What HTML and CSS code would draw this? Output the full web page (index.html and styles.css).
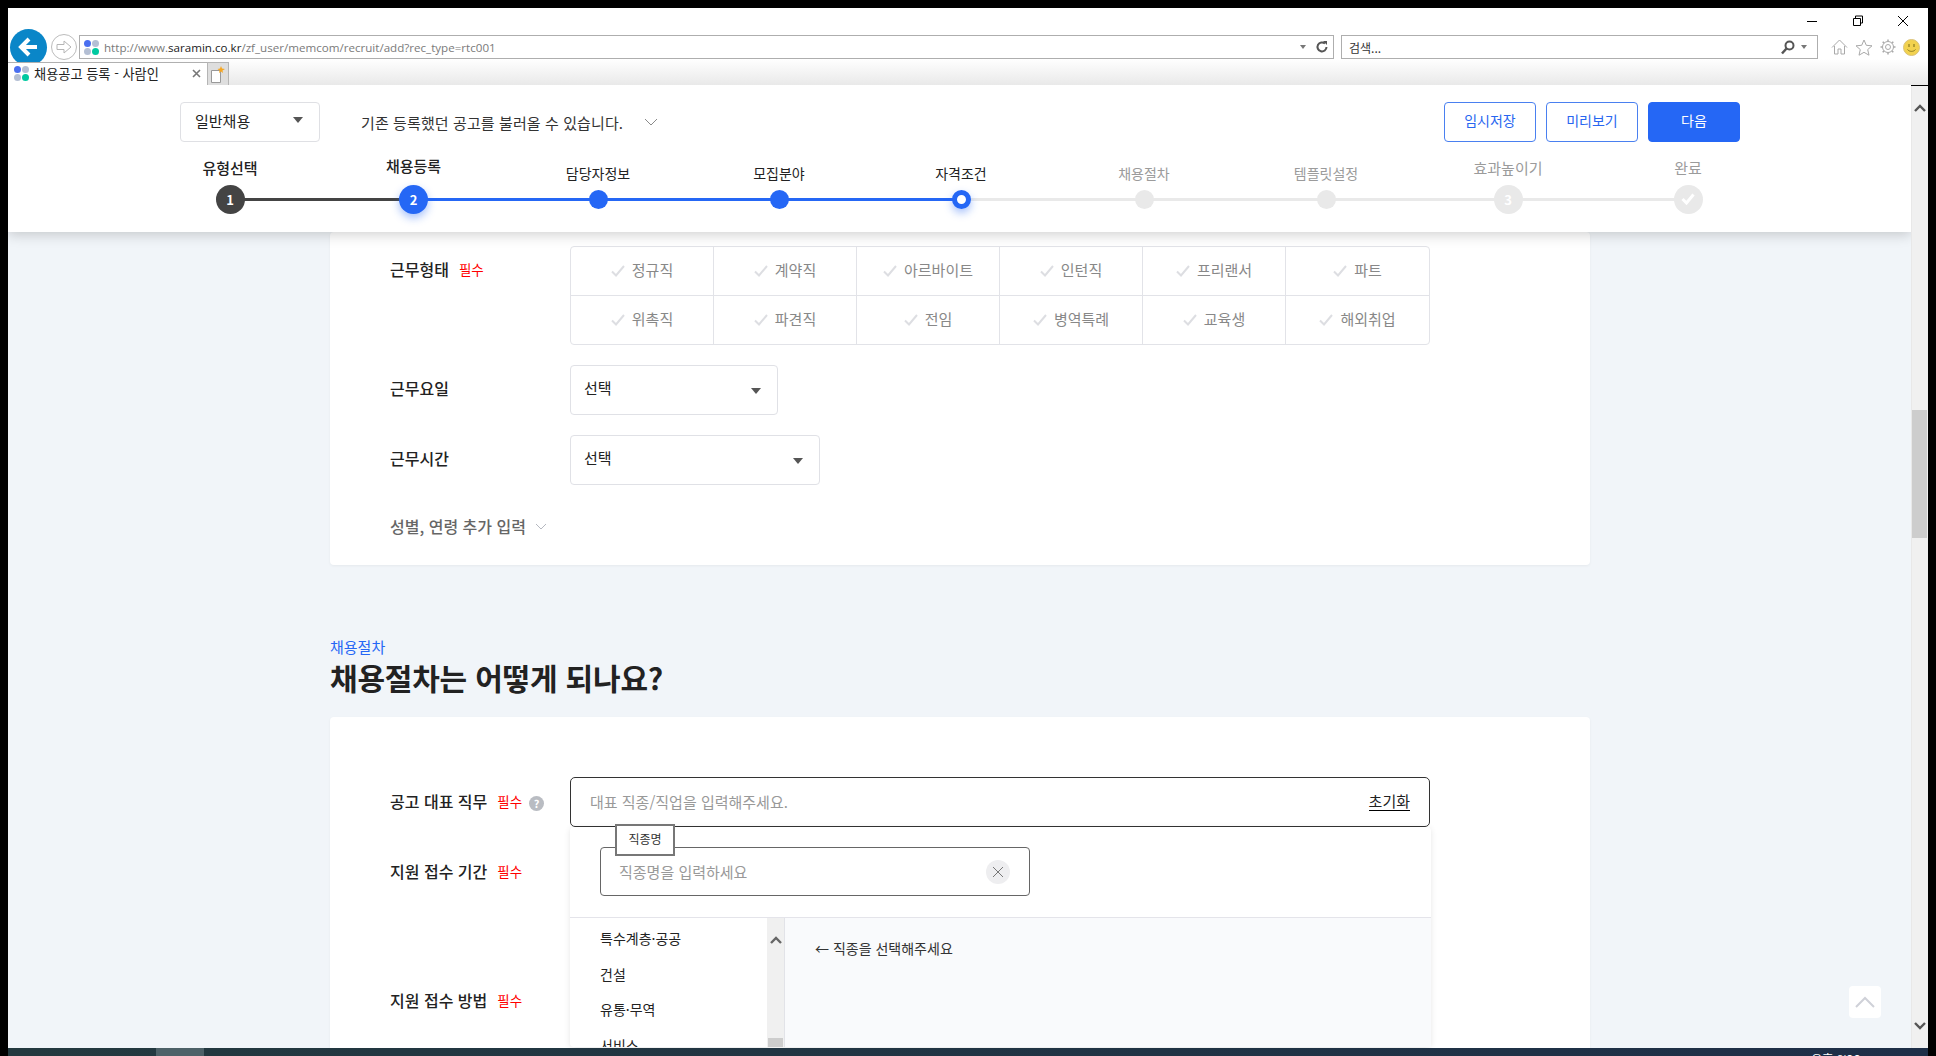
FILE: index.html
```html
<!DOCTYPE html>
<html lang="ko">
<head>
    <meta charset="UTF-8">
    <title>채용공고 등록 - 사람인</title>
    <link rel="stylesheet" href="styles.css">
</head>
<body>
    <svg class="defs" width="0" height="0">
        <symbol id="check" viewBox="0 0 14 12"><path d="M1 6.5 5 10.5 13 1" fill="none" stroke="currentColor" stroke-width="2"/></symbol>
        <symbol id="chev-up" viewBox="0 0 12 8"><path d="M1 7 6 2l5 5" fill="none" stroke="currentColor" stroke-width="2.4"/></symbol>
    </svg>

    <div class="chrome">
        <div class="titlebar">
            <svg class="winbtn" width="12" height="12" viewBox="0 0 12 12"><path d="M1 6.5h10" stroke="#000" stroke-width="1"/></svg>
            <svg class="winbtn" width="12" height="12" viewBox="0 0 12 12"><path d="M3.5 3V1h7v7h-2M1.500 3.500h7v7h-7z" fill="none" stroke="#000"/></svg>
            <svg class="winbtn" width="12" height="12" viewBox="0 0 12 12"><path d="M1 1l10 10M11 1 1 11" stroke="#000"/></svg>
        </div>
        <div class="navbar">
            <div class="back">
                <svg width="24" height="24" viewBox="0 0 24 24"><path d="M20 12H5M12 4l-8 8 8 8" fill="none" stroke="#fff" stroke-width="4"/></svg>
            </div>
            <div class="forward">
                <svg width="18" height="16" viewBox="0 0 18 16"><path d="M2 5.500h7V2l7 6-7 6v-3.500H2z" fill="none" stroke="#b5b5b5"/></svg>
            </div>
            <div class="address">
                <span class="logo"><i></i><i></i><i></i><i></i></span>
                <span class="url">http://www.<b>saramin.co.kr</b>/zf_user/memcom/recruit/add?rec_type=rtc001</span>
                <span class="mini-arrow"></span>
                <svg width="14" height="14" viewBox="0 0 14 14"><path d="M11.500 7a4.500 4.500 0 1 1-1.500-3.400" fill="none" stroke="#555" stroke-width="2"/><path d="M8 1l4 0 0 4z" fill="#555"/></svg>
            </div>
            <div class="search">
                <span class="search-text">검색...</span>
                <svg width="14" height="15" viewBox="0 0 14 15"><circle cx="8.500" cy="5.500" r="4" fill="none" stroke="#555" stroke-width="2"/><path d="M5.500 8.500 1 13.500" stroke="#555" stroke-width="2.500"/></svg>
                <span class="mini-arrow"></span>
            </div>
            <div class="tools">
                <svg width="17" height="16" viewBox="0 0 17 16"><path d="M1 8.500 8.500 1 16 8.500M3.500 7v8h3.500v-5h3v5h3.500V7" fill="none" stroke="#a9a9a9"/></svg>
                <svg width="18" height="17" viewBox="0 0 18 17"><path d="M9 1l2.300 5.300 5.700.5-4.300 3.800 1.300 5.600L9 13.300l-5 2.900 1.300-5.600L1 6.800l5.700-.5z" fill="none" stroke="#a9a9a9"/></svg>
                <svg width="16" height="16" viewBox="0 0 16 16"><circle cx="8" cy="8" r="2.500" fill="none" stroke="#a9a9a9"/><circle cx="8" cy="8" r="5.500" fill="none" stroke="#a9a9a9" stroke-width="1"/><path d="M8 .5v2M8 13.500v2M.5 8h2M13.500 8h2M2.700 2.700l1.400 1.400M11.900 11.900l1.400 1.400M13.300 2.700l-1.400 1.400M4.100 11.900l-1.400 1.400" stroke="#a9a9a9" stroke-width="1.500"/></svg>
                <svg width="17" height="17" viewBox="0 0 17 17"><circle cx="8.500" cy="8.500" r="8" fill="#f2d24f" stroke="#d9c27a"/><path d="M6 5v3M11 5v3" stroke="#8a7a20" stroke-width="1.200"/><path d="M4.500 10.500c2 2.500 6 2.500 8 0" fill="none" stroke="#8a7a20"/></svg>
            </div>
        </div>
        <div class="tabbar">
            <div class="tab">
                <span class="logo"><i></i><i></i><i></i><i></i></span>
                <span class="tab-title">채용공고 등록 - 사람인</span>
                <svg class="tab-close" width="9" height="9" viewBox="0 0 9 9"><path d="M1 1l7 7M8 1 1 8" stroke="#777" stroke-width="1.600"/></svg>
            </div>
            <div class="newtab">
                <svg width="14" height="17" viewBox="0 0 14 17"><path d="M.5 4.500h9v12h-9z" fill="#fff" stroke="#999"/><path d="M10 0l1 2.500L14 3l-2.500 1.500L12 7l-2-1.500L8 7l.5-2.500L6.500 3 9 2.500z" fill="#f5a623"/></svg>
            </div>
        </div>
    </div>

    <div class="viewport">
        <div class="page">
            <header class="header">
                <div class="toolbar">
                    <div class="toolbar-left">
                        <div class="type-select">일반채용<span class="caret"></span></div>
                        <div class="loader">기존 등록했던 공고를 불러올 수 있습니다.
                            <svg width="14" height="8" viewBox="0 0 14 8"><path d="M1 1l6 6 6-6" fill="none" stroke="#8a8a8a"/></svg>
                        </div>
                    </div>
                    <div class="toolbar-right">
                        <button class="btn">임시저장</button>
                        <button class="btn">미리보기</button>
                        <button class="btn btn-primary">다음</button>
                    </div>
                </div>
                <ol class="stepper">
                    <li class="step line-dark"><span class="step-label big">유형선택</span><span class="dot-wrap"><span class="dot large dark">1</span></span></li>
                    <li class="step line-blue"><span class="step-label big up">채용등록</span><span class="dot-wrap"><span class="dot large blue glow">2</span></span></li>
                    <li class="step line-blue"><span class="step-label">담당자정보</span><span class="dot-wrap"><span class="dot blue"></span></span></li>
                    <li class="step line-blue"><span class="step-label">모집분야</span><span class="dot-wrap"><span class="dot blue"></span></span></li>
                    <li class="step"><span class="step-label">자격조건</span><span class="dot-wrap"><span class="dot current glow"></span></span></li>
                    <li class="step off"><span class="step-label">채용절차</span><span class="dot-wrap"><span class="dot"></span></span></li>
                    <li class="step off"><span class="step-label">템플릿설정</span><span class="dot-wrap"><span class="dot"></span></span></li>
                    <li class="step off"><span class="step-label big">효과높이기</span><span class="dot-wrap"><span class="dot large">3</span></span></li>
                    <li class="step off last"><span class="step-label big">완료</span><span class="dot-wrap"><span class="dot large">
                        <svg width="14" height="12" viewBox="0 0 14 12"><path d="M1.500 6 5.500 10 12.500 1.500" fill="none" stroke="#fff" stroke-width="3"/></svg>
                    </span></span></li>
                </ol>
            </header>

            <main class="main">
                <section class="card card-cut">
                    <div class="row">
                        <div class="label">근무형태 <em class="req">필수</em></div>
                        <div class="checks">
                            <div class="check"><svg><use href="#check"/></svg>정규직</div>
                            <div class="check"><svg><use href="#check"/></svg>계약직</div>
                            <div class="check"><svg><use href="#check"/></svg>아르바이트</div>
                            <div class="check"><svg><use href="#check"/></svg>인턴직</div>
                            <div class="check"><svg><use href="#check"/></svg>프리랜서</div>
                            <div class="check"><svg><use href="#check"/></svg>파트</div>
                            <div class="check"><svg><use href="#check"/></svg>위촉직</div>
                            <div class="check"><svg><use href="#check"/></svg>파견직</div>
                            <div class="check"><svg><use href="#check"/></svg>전임</div>
                            <div class="check"><svg><use href="#check"/></svg>병역특례</div>
                            <div class="check"><svg><use href="#check"/></svg>교육생</div>
                            <div class="check"><svg><use href="#check"/></svg>해외취업</div>
                        </div>
                    </div>
                    <div class="row">
                        <div class="label">근무요일</div>
                        <div class="select select-day">선택<span class="caret"></span></div>
                    </div>
                    <div class="row">
                        <div class="label">근무시간</div>
                        <div class="select select-time">선택<span class="caret"></span></div>
                    </div>
                    <div class="more">성별, 연령 추가 입력
                        <svg width="12" height="7" viewBox="0 0 12 7"><path d="M1 1l5 5 5-5" fill="none" stroke="#b5b8c0"/></svg>
                    </div>
                </section>

                <div class="section-head">
                    <p class="eyebrow">채용절차</p>
                    <h2 class="section-title">채용절차는 어떻게 되나요?</h2>
                </div>

                <section class="card card-steps">
                    <div class="row">
                        <div class="label">공고 대표 직무 <em class="req">필수</em><span class="help">?</span></div>
                        <div class="job-field">
                            <div class="job-input"><span class="placeholder">대표 직종/직업을 입력해주세요.</span><a class="reset">초기화</a></div>
                            <div class="dropdown">
                                <div class="dropdown-top">
                                    <div class="job-search">
                                        <span class="job-tag">직종명</span>
                                        <span class="placeholder">직종명을 입력하세요</span>
                                        <span class="clear"><svg width="12" height="12" viewBox="0 0 12 12"><path d="M1 1l10 10M11 1 1 11" stroke="#777"/></svg></span>
                                    </div>
                                </div>
                                <div class="dropdown-body">
                                    <ul class="job-list">
                                        <li>특수계층·공공</li>
                                        <li>건설</li>
                                        <li>유통·무역</li>
                                        <li>서비스</li>
                                    </ul>
                                    <div class="list-scroll">
                                        <svg width="12" height="8"><use href="#chev-up"/></svg>
                                        <span class="list-thumb"></span>
                                    </div>
                                    <div class="job-hint">← 직종을 선택해주세요</div>
                                </div>
                            </div>
                        </div>
                    </div>
                    <div class="row row-period">
                        <div class="label">지원 접수 기간 <em class="req">필수</em></div>
                    </div>
                    <div class="row">
                        <div class="label">지원 접수 방법 <em class="req">필수</em></div>
                    </div>
                </section>
            </main>

            <div class="to-top"><svg width="20" height="12" viewBox="0 0 20 12"><path d="M1 11 10 2l9 9" fill="none" stroke="#cfd1d8" stroke-width="2"/></svg></div>
        </div>
        <div class="scrollbar">
            <svg width="12" height="8"><use href="#chev-up"/></svg>
            <span class="thumb"></span>
            <svg class="flip" width="12" height="8"><use href="#chev-up"/></svg>
        </div>
    </div>

    <div class="taskbar">
        <span class="task-active"></span>
        <span class="clock">오후 8:26</span>
        <span class="show-desktop"></span>
    </div>
</body>
</html>
```

FILE: styles.css
```css
* {
    box-sizing: border-box;
}

html, body {
    height: 100%;
}

body {
    margin: 0;
    padding: 8px 8px 0;
    background-color: #000;
    display: flex;
    flex-direction: column;
    overflow: hidden;
    font-family: "Noto Sans CJK KR", "Noto Sans", sans-serif;
    color: #222;
}

.defs {
    display: block;
    height: 0;
}

/* browser chrome */
.chrome {
    flex: none;
    height: 77px;
    background-color: #fff;
}

.titlebar {
    height: 27px;
    display: flex;
    justify-content: flex-end;
    align-items: center;
    gap: 33.500px;
    padding: 0 19px 2px 0;
}

.navbar {
    height: 24px;
    display: flex;
    align-items: center;
}

.back {
    width: 37px;
    height: 37px;
    margin: 0 0 0 2px;
    border-radius: 50%;
    background-color: #0a86c8;
    display: flex;
    align-items: center;
    justify-content: center;
    flex: none;
}

.forward {
    width: 26px;
    height: 26px;
    margin-left: 4px;
    border: 1px solid #bcbcbc;
    border-radius: 50%;
    display: flex;
    align-items: center;
    justify-content: center;
    flex: none;
}

.address, .search {
    height: 24px;
    border: 1px solid #aeaeae;
    display: flex;
    align-items: center;
    font-size: 12px;
}

.address {
    width: 1255px;
    margin-left: 2px;
    padding: 0 4px;
    flex: none;
}

.address svg, .search svg {
    flex: none;
}

.logo {
    width: 15px;
    height: 15px;
    display: grid;
    grid-template-columns: 7px 7px;
    grid-template-rows: 7px 7px;
    gap: 1px;
    flex: none;
}

.logo i {
    border-radius: 50%;
    background-color: #b4bfd4;
}

.logo i:first-child {
    background-color: #4a6ff0;
}

.logo i:last-child {
    background-color: #00c9a0;
}

.url {
    margin-left: 5px;
    flex: 1;
    color: #7a7a7a;
    font-family: "Open Sans", sans-serif;
    font-size: 11.600px;
    white-space: nowrap;
}

.url b {
    font-weight: 400;
    color: #222;
}

.mini-arrow {
    width: 0;
    height: 0;
    border-left: 3.500px solid transparent;
    border-right: 3.500px solid transparent;
    border-top: 4px solid #777;
    margin-right: 9px;
    flex: none;
}

.search {
    width: 477px;
    margin-left: 7px;
    padding: 0 10px 0 7px;
    flex: none;
}

.search-text {
    flex: 1;
    font-size: 12px;
    color: #333;
}

.search .mini-arrow {
    margin: 0 0 0 6px;
}

.tools {
    flex: 1;
    display: flex;
    align-items: center;
    gap: 7px;
    padding-left: 13px;
}

.tabbar {
    height: 26px;
    padding-top: 3px;
    display: flex;
    background: linear-gradient(#fff, #e9e9e9);
}

.tab {
    width: 199px;
    height: 23px;
    padding: 0 5px 2px 6px;
    background-color: #fff;
    border-top: 1px solid #b0b0b0;
    display: flex;
    align-items: center;
}

.tab-title {
    margin-left: 5px;
    flex: 1;
    font-size: 13.200px;
    color: #222;
}

.tab-close {
    margin-right: 1px;
}

.newtab {
    width: 22px;
    height: 23px;
    background-color: #dedede;
    border: 1px solid #b5b5b5;
    border-bottom: 0;
    display: flex;
    align-items: center;
    justify-content: center;
}

/* page */
.viewport {
    flex: 1;
    min-height: 0;
    display: flex;
}

.page {
    flex: 1;
    position: relative;
    overflow: hidden;
    background-color: #f1f5f9;
}

.scrollbar {
    width: 17px;
    margin-top: 1px;
    background-color: #f0f0f0;
    border-left: 1px solid #e8e8e8;
    display: flex;
    flex-direction: column;
    align-items: center;
    color: #555;
    position: relative;
}

.scrollbar svg {
    position: absolute;
    top: 18px;
}

.scrollbar .flip {
    top: auto;
    bottom: 18px;
    transform: rotate(180deg);
}

.thumb {
    position: absolute;
    top: 324px;
    left: 0;
    width: 15px;
    height: 128px;
    background-color: #cdcdcd;
}

.header {
    height: 147px;
    position: relative;
    z-index: 5;
    background-color: #fff;
    box-shadow: 0 3px 12px rgba(0, 0, 0, 0.18);
}

.toolbar {
    height: 57px;
    padding: 17px 171px 0 172px;
    display: flex;
    justify-content: space-between;
}

.toolbar-left, .toolbar-right {
    display: flex;
    align-items: center;
}

.toolbar-right {
    gap: 10px;
}

.type-select {
    width: 140px;
    height: 40px;
    padding: 0 16px 4px 14px;
    border: 1px solid #dfe0e4;
    border-radius: 4px;
    display: flex;
    align-items: center;
    justify-content: space-between;
    font-size: 15px;
}

.caret {
    width: 0;
    height: 0;
    border-left: 5.500px solid transparent;
    border-right: 5.500px solid transparent;
    border-top: 6px solid #555;
}

.loader {
    margin-left: 41px;
    display: flex;
    align-items: center;
    gap: 21px;
    font-size: 15px;
    letter-spacing: 0.100px;
    color: #333;
}

.btn {
    width: 92px;
    height: 40px;
    padding: 0 0 4px;
    background-color: #fff;
    border: 1px solid #4a80f0;
    border-radius: 4px;
    color: #2866f0;
    font-family: inherit;
    font-size: 14px;
}

.btn-primary {
    background-color: #2567f5;
    border-color: #2567f5;
    color: #fff;
}

.stepper {
    margin: 0;
    padding: 0 0 0 131px;
    list-style: none;
    display: grid;
    grid-template-columns: 182px 185px 184px 178px 186px 180px 184px 180px 180px;
    height: 72px;
    align-items: end;
}

.step {
    display: flex;
    flex-direction: column;
    align-items: center;
}

.step-label {
    font-size: 14px;
    line-height: 20px;
    margin-bottom: 1px;
    color: #222;
}

.step-label.big {
    font-size: 15px;
    font-weight: 500;
    margin-bottom: 6px;
}

.step-label.up {
    margin-bottom: 8px;
}

.off .step-label {
    color: #9b9b9b;
    font-weight: 400;
}

.dot-wrap {
    width: 100%;
    height: 30px;
    display: flex;
    align-items: center;
    justify-content: center;
    position: relative;
}

.dot-wrap::after {
    content: "";
    position: absolute;
    left: 50%;
    top: 14px;
    width: calc(100% + 8px);
    height: 3px;
    background-color: #e9e9e9;
}

.line-dark .dot-wrap::after {
    background-color: #444;
}

.line-blue .dot-wrap::after {
    background-color: #2567f5;
}

.last .dot-wrap::after {
    display: none;
}

.dot {
    width: 19px;
    height: 19px;
    border-radius: 50%;
    background-color: #e9e9e9;
    color: #fff;
    font-size: 13px;
    font-weight: 700;
    display: flex;
    align-items: center;
    justify-content: center;
    position: relative;
    z-index: 1;
}

.dot.large {
    width: 29px;
    height: 29px;
}

.dot.dark {
    background-color: #444;
}

.dot.blue {
    background-color: #2567f5;
}

.dot.current {
    background-color: #fff;
    border: 5px solid #2567f5;
}

.dot.glow {
    box-shadow: 0 4px 8px rgba(37, 103, 245, 0.4);
}

.main {
    height: 816px;
}

.card {
    width: 1260px;
    margin-left: 322px;
    padding-left: 60px;
    background-color: #fff;
    border-radius: 4px;
    box-shadow: 0 1px 3px rgba(0, 0, 0, 0.05);
}

.card-cut {
    padding-top: 14px;
    padding-bottom: 29px;
}

.row {
    display: flex;
    margin-bottom: 20px;
}

.label {
    width: 180px;
    flex: none;
    font-size: 16px;
    font-weight: 500;
    line-height: 46px;
    white-space: pre-wrap;
}

.req {
    margin-left: 5.500px;
    font-size: 13.500px;
    font-weight: 400;
    font-style: normal;
    color: #f00;
    vertical-align: 1px;
}

.help {
    display: inline-block;
    width: 15px;
    height: 15px;
    margin-left: 7px;
    border-radius: 50%;
    background-color: #b9bcc2;
    color: #fff;
    font-size: 11px;
    font-weight: 700;
    line-height: 15px;
    text-align: center;
    vertical-align: 0;
}

.checks {
    width: 860px;
    display: grid;
    grid-template-columns: repeat(6, 1fr);
    grid-auto-rows: 48.500px;
    border: 1px solid #e2e3e8;
    border-radius: 4px;
}

.check {
    display: flex;
    align-items: center;
    justify-content: center;
    gap: 7px;
    padding-bottom: 3px;
    font-size: 15px;
    color: #888;
    border-right: 1px solid #e2e3e8;
    border-bottom: 1px solid #e2e3e8;
}

.check:nth-child(6n) {
    border-right: 0;
}

.check:nth-child(n+7) {
    border-bottom: 0;
}

.check svg {
    width: 14px;
    height: 12px;
    margin-top: 3px;
    color: #dddee2;
}

.select {
    height: 50px;
    padding: 0 16px 6px 13px;
    border: 1px solid #e0e1e6;
    border-radius: 4px;
    display: flex;
    align-items: center;
    justify-content: space-between;
    font-size: 15px;
}

.select-day {
    width: 208px;
}

.select-time {
    width: 250px;
}

.select .caret {
    margin-top: 7px;
    margin-right: 0;
}

.more {
    margin-top: 31px;
    display: flex;
    align-items: center;
    gap: 9px;
    font-size: 16px;
    font-weight: 500;
    line-height: 20px;
    color: #666;
}

.section-head {
    margin: 72px 0 20px 322px;
}

.eyebrow {
    margin: 0;
    font-size: 15px;
    line-height: 20px;
    color: #2567f5;
}

.section-title {
    margin: 0;
    font-size: 30px;
    font-weight: 700;
    line-height: 40px;
    letter-spacing: -0.200px;
    color: #222;
}

.card-steps {
    height: 340px;
    padding-top: 60px;
}

.card-steps .label {
    line-height: 49px;
}

.row-period {
    height: 109px;
}

.job-field {
    width: 860px;
    position: relative;
}

.job-input {
    height: 50px;
    padding: 0 19px 2px 19px;
    border: 1px solid #333;
    border-radius: 5px;
    display: flex;
    align-items: center;
    justify-content: space-between;
    font-size: 15px;
}

.placeholder {
    color: #999;
    font-size: 15px;
}

.reset {
    color: #222;
    border-bottom: 1px solid #000;
    line-height: 18px;
}

.dropdown {
    position: absolute;
    z-index: 2;
    top: 50px;
    left: 0;
    width: 861px;
    background-color: #fff;
    box-shadow: 0 1px 6px rgba(0, 0, 0, 0.1);
    border-radius: 4px;
}

.dropdown-top {
    height: 91px;
    padding: 20px 0 0 30px;
    border-bottom: 1px solid #e4e4ea;
}

.job-search {
    width: 430px;
    height: 49px;
    padding: 0 19px 0 18px;
    border: 1px solid #666;
    border-radius: 4px;
    display: flex;
    align-items: center;
    justify-content: space-between;
    position: relative;
}

.job-tag {
    position: absolute;
    left: 14px;
    top: -24px;
    width: 60px;
    height: 32px;
    border: 2px solid #777;
    background-color: #fff;
    font-size: 12px;
    line-height: 26px;
    text-align: center;
    color: #333;
}

.clear {
    width: 24px;
    height: 24px;
    border-radius: 50%;
    background-color: #eeeef0;
    display: flex;
    align-items: center;
    justify-content: center;
}

.dropdown-body {
    height: 129px;
    display: flex;
    overflow: hidden;
}

.job-list {
    width: 197px;
    margin: 0;
    padding: 3px 0 0 30px;
    list-style: none;
    font-size: 14px;
    line-height: 35.500px;
    flex: none;
}

.list-scroll {
    width: 18px;
    background-color: #f0f0f0;
    border-right: 1px solid #e2e3e8;
    position: relative;
    text-align: center;
    color: #666;
    flex: none;
}

.list-scroll svg {
    display: block;
    margin: 18px auto 0;
}

.list-thumb {
    position: absolute;
    left: 1px;
    top: 120px;
    width: 15px;
    height: 60px;
    background-color: #cdcdcd;
}

.job-hint {
    flex: 1;
    padding: 18px 0 0 30px;
    background-color: #f9fafc;
    font-size: 14px;
    line-height: 24px;
    color: #333;
}

.to-top {
    position: absolute;
    right: 30px;
    bottom: 30px;
    z-index: 6;
    width: 32px;
    height: 32px;
    border-radius: 4px;
    background-color: #fff;
    display: flex;
    align-items: center;
    justify-content: center;
}

/* windows taskbar, only the top strip is on screen */
.taskbar {
    flex: none;
    height: 8px;
    display: flex;
    overflow: hidden;
    background: linear-gradient(90deg, #23393f, #1e2f48);
    color: #fff;
    font-size: 12px;
    line-height: 16px;
}

.task-active {
    width: 48px;
    margin-left: 148px;
    background-color: #4d6168;
}

.clock {
    margin-left: auto;
    padding: 3px 68px 0 0;
    font-family: "Noto Sans CJK KR", sans-serif;
}

.show-desktop {
    display: none;
}
```
